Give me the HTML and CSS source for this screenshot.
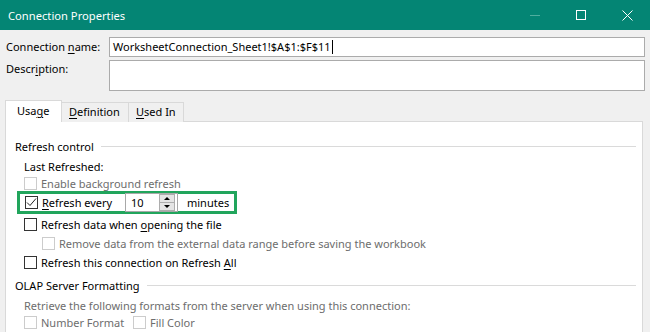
FILE: index.html
```html
<!DOCTYPE html>
<html>
<head>
<meta charset="utf-8">
<link rel="stylesheet" href="styles.css">
</head>
<body>
<div class="titlebar">
  <div class="title">Connection Properties</div>
  <div class="controls">
    <span class="ctl min"><svg width="11" height="11" viewBox="0 0 11 11"><line x1="0" y1="5.5" x2="10" y2="5.5" stroke="#4fae9f" stroke-width="1"/></svg></span>
    <span class="ctl max"><svg width="11" height="11" viewBox="0 0 11 11"><rect x="0.5" y="0.5" width="9" height="9" fill="none" stroke="#fff" stroke-width="1"/></svg></span>
    <span class="ctl close"><svg width="11" height="11" viewBox="0 0 11 11"><path d="M0.5 0.5 L10.5 10.5 M10.5 0.5 L0.5 10.5" stroke="#fff" stroke-width="1"/></svg></span>
  </div>
</div>
<div class="content">
  <div class="field">
    <label class="flabel">Connection <u>n</u>ame:</label>
    <div class="input single">WorksheetConnection_Sheet1!$A$1:$F$11<span class="caret"></span></div>
  </div>
  <div class="field">
    <label class="flabel top">Descr<u>i</u>ption:</label>
    <div class="input multi"></div>
  </div>

  <div class="tabs">
    <div class="tab active">Usa<u>g</u>e</div>
    <div class="tab t-def"><u>D</u>efinition</div>
    <div class="tab t-used"><u>U</u>sed In</div>
  </div>
  <div class="panel">
    <div class="group h-23"><span>Refresh control</span><span class="rule"></span></div>
    <div class="row h-17 ind"><span>Last Refreshed:</span></div>
    <div class="row h-16 ind dis"><span class="cb dis"></span><span>Enable background refresh</span></div>
    <div class="highlight">
      <span class="cb"><svg width="11" height="11" viewBox="0 0 11 11"><path d="M1 5.5 L4 8.5 L10 1.5" fill="none" stroke="#222" stroke-width="1"/></svg></span>
      <span class="lbl"><u>R</u>efresh every</span>
      <span class="spin"><span class="spinval">10</span><span class="spinbtns"><span class="sb up"></span><span class="sb down"></span></span></span>
      <span class="mins">minutes</span>
    </div>
    <div class="row h-19 ind top1"><span class="cb"></span><span>Refresh data when <u>o</u>pening the file</span></div>
    <div class="row h-19 ind2 dis"><span class="cb dis"></span><span>Remove data from the external data range before saving the workbook</span></div>
    <div class="row h-19 ind"><span class="cb"></span><span>Refresh this connection on Refresh <u>A</u>ll</span></div>
    <div class="group h-22 top2"><span>OLAP Server Formatting</span><span class="rule"></span></div>
    <div class="row h-18 ind dis"><span>Retrieve the following formats from the server when using this connection:</span></div>
    <div class="row h-16 ind dis"><span class="cb dis"></span><span class="nf">Number Format</span><span class="cb dis"></span><span>Fill Color</span></div>
  </div>
</div>
</body>
</html>
```
FILE: styles.css
```css
* { box-sizing: border-box; }
html, body { margin: 0; padding: 0; }
body {
  width: 650px;
  height: 332px;
  overflow: hidden;
  background: #f0f0f0;
  font-family: "Noto Sans", "Segoe UI", sans-serif;
  font-size: 11px;
  color: #000;
}
u { text-decoration: underline; text-underline-offset: 2px; }

.titlebar {
  height: 30px;
  background: #048574;
  color: #fff;
  display: flex;
  align-items: center;
  justify-content: space-between;
}
.title { padding-left: 8px; font-size: 11.2px; }
.controls { display: flex; height: 30px; }
.ctl { width: 46px; display: flex; align-items: center; justify-content: center; }
.ctl svg { display: block; }

.content { padding: 7px 5px 0 6px; }
.field { display: flex; margin-bottom: 3px; }
.flabel { width: 103px; line-height: 20px; }
.flabel.top { line-height: 16px; padding-top: 1px; }
.input {
  flex: 1;
  background: #fff;
  border: 1px solid #ababab;
}
.input.single { height: 20px; line-height: 17px; padding-left: 3px; font-size: 11px; }
.input.multi { height: 31px; }
.caret { display: inline-block; width: 1px; height: 14px; background: #000; vertical-align: -3px; margin-left: 1px; }

.tabs { display: flex; align-items: flex-end; margin-top: 9px; height: 22px; position: relative; z-index: 1; margin-bottom: -1px; margin-left: -1px; }
.tab {
  height: 20px;
  padding: 0 0 0 7px;
  line-height: 18px;
  border: 1px solid #d9d9d9;
  border-bottom: none;
  background: #f0f0f0;
}
.tab.active {
  height: 22px;
  width: 57px;
  padding-left: 11px;
  background: #fff;
  line-height: 19px;
}
.t-def { width: 68px; margin-left: -1px; }
.t-used { width: 56px; margin-left: -1px; }
.panel {
  margin-left: -1px;
  margin-right: 2px;
  background: #fff;
  border: 1px solid #d9d9d9;
  border-bottom: none;
  height: 220px;
  padding: 13px 6px 0 9px;
}
.group { display: flex; align-items: center; }
.rule { flex: 1; height: 1px; background: #dadada; margin-left: 7px; }
.row { display: flex; align-items: center; white-space: pre; }
.h-16 { height: 16px; }
.h-17 { height: 17px; }
.h-18 { height: 18px; }
.h-19 { height: 19px; }
.h-22 { height: 22px; }
.h-23 { height: 23px; }
.ind { padding-left: 9px; }
.ind2 { padding-left: 27px; }
.top1 { margin-top: 1px; }
.top2 { margin-top: 2px; }
.dis { color: #6d6d6d; }

.cb {
  width: 13px; height: 13px;
  border: 1px solid #333;
  background: #fff;
  margin-right: 4px;
  flex: none;
  display: inline-flex; align-items: center; justify-content: center;
}
.cb.dis { border-color: #cccccc; }
.nf { width: 92px; }

.highlight {
  margin-left: 2px;
  width: 220px;
  height: 23px;
  border: 3px solid #21a55c;
  display: flex;
  align-items: center;
  padding-left: 5px;
}
.highlight .lbl { width: 83px; }
.spin {
  display: flex;
  align-items: center;
  width: 53px;
  height: 19px;
  border: 1px solid #a8a8a8;
  background: #fff;
}
.spinval { flex: 1; padding-left: 5px; line-height: 16px; }
.spinbtns {
  width: 16px; height: 17px;
  display: flex; flex-direction: column;
  margin-right: 2px;
  border: 1px solid #adadad;
  background: #e5e5e5;
}
.sb { flex: 1; position: relative; }
.sb.up { border-bottom: 1px solid #adadad; }
.sb.up::after {
  content: ""; position: absolute; left: 4px; top: 2px;
  border-left: 3px solid transparent; border-right: 3px solid transparent;
  border-bottom: 3px solid #000;
}
.sb.down::after {
  content: ""; position: absolute; left: 4px; top: 2px;
  border-left: 3px solid transparent; border-right: 3px solid transparent;
  border-top: 3px solid #000;
}
.mins { margin-left: 9px; }
```
